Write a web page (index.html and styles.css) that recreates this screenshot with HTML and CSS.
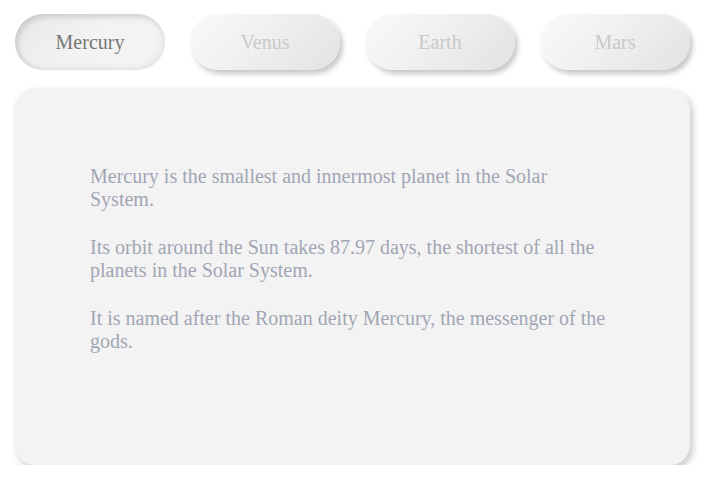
FILE: index.html
```html
<!DOCTYPE html>
<html>
<head>
<meta charset="utf-8">
<link rel="stylesheet" href="styles.css">
</head>
<body>
<div class="app">
  <div class="tabs">
    <div class="tab active">Mercury</div>
    <div class="tab">Venus</div>
    <div class="tab">Earth</div>
    <div class="tab">Mars</div>
  </div>
  <div class="panel">
    <p>Mercury is the smallest and innermost planet in the Solar System.</p>
    <p>Its orbit around the Sun takes 87.97 days, the shortest of all the planets in the Solar System.</p>
    <p>It is named after the Roman deity Mercury, the messenger of the gods.</p>
  </div>
</div>
</body>
</html>
```
FILE: styles.css
```css
html, body {
  margin: 0;
  padding: 0;
  background: #ffffff;
}
body {
  font-family: "Liberation Serif", "Times New Roman", serif;
}
.app {
  padding: 14px 16px 0 15px;
  width: 675px;
}
.tabs {
  display: flex;
  gap: 25px;
}
.tab {
  width: 150px;
  height: 56px;
  border-radius: 28px;
  display: flex;
  align-items: center;
  justify-content: center;
  font-size: 20px;
  color: #c9c9c9;
  background: linear-gradient(135deg, #fafafa 0%, #f0f0f0 45%, #e2e2e2 100%);
  box-shadow: 3px 4px 5px rgba(0,0,0,0.22);
}
.tab.active {
  color: #777777;
  background: linear-gradient(135deg, #e8e8e8 0%, #f3f3f3 50%, #f4f4f4 100%);
  box-shadow: inset 3px 3px 6px rgba(0,0,0,0.14), inset -3px -3px 6px rgba(0,0,0,0.05), 0 0 2px rgba(0,0,0,0.05);
}
.panel {
  margin-top: 19px;
  height: 376px;
  box-sizing: border-box;
  background: #f3f3f3;
  border-radius: 20px;
  padding: 76px 75px 0 75px;
  box-shadow: 3px 4px 7px rgba(0,0,0,0.2), -1px -1px 4px rgba(0,0,0,0.03);
}
.panel p {
  margin: 0 0 25px 0;
  font-size: 20px;
  line-height: 23px;
  color: #a1a6b4;
}
```
